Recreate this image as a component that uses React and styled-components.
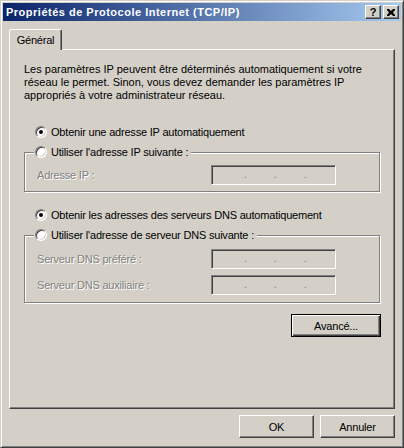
import React from "react";
import styled, { createGlobalStyle } from "styled-components";

const face = "#d4d0c8";
const shadow = "#808080";
const dark = "#404040";

const GlobalStyle = createGlobalStyle`
  html, body {
    margin: 0;
    padding: 0;
    background: ${face};
  }
  * {
    box-sizing: border-box;
  }
`;

export default function App() {
  return (
    <>
      <GlobalStyle />
      <Window>
        <TitleBar>
          <TitleText>Propriétés de Protocole Internet (TCP/IP)</TitleText>
          <CaptionButtons>
            <CaptionButton>
              <HelpGlyph>?</HelpGlyph>
            </CaptionButton>
            <CaptionButton>
              <svg width="8" height="7" viewBox="0 0 8 7">
                <path
                  d="M0 0h2l2 2 2-2h2v1L6 3.5 8 6v1H6L4 5 2 7H0V6l2-2.5L0 1z"
                  fill="#000"
                />
              </svg>
            </CaptionButton>
          </CaptionButtons>
        </TitleBar>

        <Body>
          <TabStrip>
            <Tab>Général</Tab>
          </TabStrip>
          <Panel>
            <Intro>
              Les paramètres IP peuvent être déterminés automatiquement si votre
              <br />
              réseau le permet. Sinon, vous devez demander les paramètres IP
              <br />
              appropriés à votre administrateur réseau.
            </Intro>

            <RadioRow $top={23}>
              <Radio $checked />
              <span>Obtenir une adresse IP automatiquement</span>
            </RadioRow>

            <GroupBox $top={14} $height={40}>
              <Legend>
                <Radio />
                <span>Utiliser l'adresse IP suivante :</span>
              </Legend>
              <FieldList $top={7}>
                <FieldRow>
                  <FieldLabel>Adresse IP :</FieldLabel>
                  <IpField />
                </FieldRow>
              </FieldList>
            </GroupBox>

            <RadioRow $top={16}>
              <Radio $checked />
              <span>Obtenir les adresses des serveurs DNS automatiquement</span>
            </RadioRow>

            <GroupBox $top={14} $height={68}>
              <Legend>
                <Radio />
                <span>Utiliser l'adresse de serveur DNS suivante :</span>
              </Legend>
              <FieldList $top={8}>
                <FieldRow>
                  <FieldLabel>Serveur DNS préféré :</FieldLabel>
                  <IpField />
                </FieldRow>
                <FieldRow>
                  <FieldLabel>Serveur DNS auxiliaire :</FieldLabel>
                  <IpField />
                </FieldRow>
              </FieldList>
            </GroupBox>

            <AdvancedButton>Avancé...</AdvancedButton>
          </Panel>

          <ButtonBar>
            <PushButton>OK</PushButton>
            <PushButton>Annuler</PushButton>
          </ButtonBar>
        </Body>
      </Window>
    </>
  );
}

function IpField() {
  return (
    <FieldBox>
      <Dot>.</Dot>
      <Dot>.</Dot>
      <Dot>.</Dot>
    </FieldBox>
  );
}

const Window = styled.div`
  width: 404px;
  height: 448px;
  padding: 2px;
  border: 1px solid;
  border-color: ${face} ${dark} ${dark} ${face};
  box-shadow: inset 1px 1px #fff, inset -1px -1px ${shadow};
  background: ${face};
  display: flex;
  flex-direction: column;
  font-family: "Liberation Sans", Arial, sans-serif;
  font-size: 11px;
  letter-spacing: -0.2px;
  color: #000;
`;

const TitleBar = styled.div`
  height: 18px;
  flex-shrink: 0;
  display: flex;
  align-items: center;
  justify-content: space-between;
  padding: 0 2px 0 3px;
  background: linear-gradient(to right, #0a246a, #a6caf0);
`;

const TitleText = styled.div`
  color: #fff;
  font-weight: bold;
  font-size: 11px;
  letter-spacing: 0.5px;
  white-space: nowrap;
`;

const CaptionButtons = styled.div`
  display: flex;
  gap: 2px;
`;

const CaptionButton = styled.div`
  width: 16px;
  height: 14px;
  display: flex;
  align-items: center;
  justify-content: center;
  background: ${face};
  border: 1px solid;
  border-color: #fff ${dark} ${dark} #fff;
  box-shadow: inset -1px -1px ${shadow};
`;

const HelpGlyph = styled.span`
  font-weight: bold;
  font-size: 11px;
  line-height: 11px;
  margin-top: 1px;
`;

const Body = styled.div`
  flex: 1;
  display: flex;
  flex-direction: column;
  padding: 8px 6px 0;
`;

const TabStrip = styled.div`
  display: flex;
  height: 20px;
`;

const Tab = styled.div`
  position: relative;
  z-index: 1;
  width: 53px;
  height: 21px;
  display: flex;
  align-items: center;
  justify-content: center;
  padding-bottom: 1px;
  background: ${face};
  border: 1px solid;
  border-bottom: none;
  border-color: #fff ${dark} transparent #fff;
  border-radius: 2px 2px 0 0;
  box-shadow: inset -1px 0 ${shadow};
`;

const Panel = styled.div`
  height: 360px;
  display: flex;
  flex-direction: column;
  padding: 0 14px;
  border: 1px solid;
  border-color: #fff ${dark} ${dark} #fff;
  box-shadow: inset -1px -1px ${shadow};
`;

const Intro = styled.p`
  margin: 13px 0 0;
  line-height: 13px;
  letter-spacing: 0;
  white-space: nowrap;
`;

const RadioRow = styled.div`
  display: flex;
  align-items: center;
  gap: 4px;
  height: 13px;
  margin-top: ${(p) => p.$top}px;
  padding-left: 11px;
  white-space: nowrap;
`;

const Radio = styled.span`
  width: 12px;
  height: 12px;
  flex-shrink: 0;
  display: flex;
  align-items: center;
  justify-content: center;
  border-radius: 50%;
  border: 1px solid;
  border-color: ${shadow} #fff #fff ${shadow};
  background: #fff;
  box-shadow: inset 1px 1px ${dark}, inset -1px -1px ${face};

  &::after {
    content: "";
    width: 4px;
    height: 4px;
    border-radius: 50%;
    background: ${(p) => (p.$checked ? "#000" : "transparent")};
  }
`;

const GroupBox = styled.div`
  height: ${(p) => p.$height}px;
  margin-top: ${(p) => p.$top}px;
  display: flex;
  flex-direction: column;
  border: 1px solid ${shadow};
  box-shadow: inset 1px 1px #fff, 1px 1px #fff;
`;

const Legend = styled.div`
  align-self: flex-start;
  display: flex;
  align-items: center;
  gap: 4px;
  height: 13px;
  margin: -8px 0 0 9px;
  padding: 0 3px 0 1px;
  background: ${face};
  white-space: nowrap;
`;

const FieldList = styled.div`
  display: flex;
  flex-direction: column;
  gap: 6px;
  margin-top: ${(p) => p.$top}px;
  padding-left: 12px;
`;

const FieldRow = styled.div`
  display: flex;
  align-items: center;
`;

const FieldLabel = styled.span`
  width: 174px;
  color: ${shadow};
  text-shadow: 1px 1px #fff;
  white-space: nowrap;
`;

const FieldBox = styled.div`
  width: 125px;
  height: 20px;
  display: flex;
  align-items: center;
  gap: 27px;
  padding: 0 0 1px 32px;
  background: ${face};
  border: 1px solid;
  border-color: ${shadow} #fff #fff ${shadow};
  box-shadow: inset 1px 1px ${dark}, inset -1px -1px ${face};
`;

const Dot = styled.span`
  color: ${shadow};
  line-height: 11px;
`;

const PushButton = styled.button`
  width: 75px;
  height: 23px;
  padding: 0;
  font: inherit;
  letter-spacing: inherit;
  color: #000;
  background: ${face};
  border: 1px solid;
  border-color: #fff ${dark} ${dark} #fff;
  border-radius: 0;
  box-shadow: inset -1px -1px ${shadow};
`;

const AdvancedButton = styled(PushButton)`
  width: 90px;
  align-self: flex-end;
  margin: 11px -1px 0 0;
  border: 1px solid #000;
  box-shadow: inset 1px 1px #fff, inset -1px -1px ${dark},
    inset -2px -2px ${shadow};
`;

const ButtonBar = styled.div`
  display: flex;
  justify-content: flex-end;
  gap: 6px;
  margin-top: 6px;
`;
